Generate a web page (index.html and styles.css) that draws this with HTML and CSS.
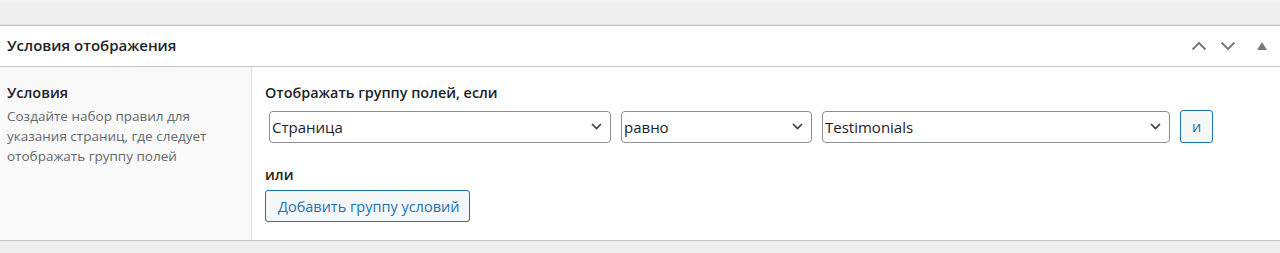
FILE: index.html
```html
<!DOCTYPE html>
<html lang="ru">
<head>
<meta charset="utf-8">
<link rel="stylesheet" href="styles.css">
</head>
<body>
<div class="top-strip"></div>
<div class="postbox">
  <div class="postbox-header">
    <h2 class="title">Условия отображения</h2>
    <div class="actions">
      <button class="icon-btn" aria-label="up">
        <svg width="16" height="10" viewBox="0 0 16 10"><path d="M1.5 8.5 L8 2 L14.5 8.5" fill="none" stroke="#787c82" stroke-width="2"/></svg>
      </button>
      <button class="icon-btn down" aria-label="down">
        <svg width="16" height="10" viewBox="0 0 16 10"><path d="M1.5 1.5 L8 8 L14.5 1.5" fill="none" stroke="#787c82" stroke-width="2"/></svg>
      </button>
      <button class="icon-btn tri" aria-label="toggle">
        <svg width="10" height="8" viewBox="0 0 10 8"><path d="M5 0 L10 8 L0 8 Z" fill="#787c82"/></svg>
      </button>
    </div>
  </div>
  <div class="postbox-body">
    <div class="label-col">
      <div class="label">Условия</div>
      <p class="desc">Создайте набор правил для указания страниц, где следует отображать группу полей</p>
    </div>
    <div class="input-col">
      <div class="group-title">Отображать группу полей, если</div>
      <div class="rule-row">
        <div class="select s1"><span>Страница</span><svg class="chev" width="11" height="7" viewBox="0 0 11 7"><path d="M1 1 L5.5 5.5 L10 1" fill="none" stroke="#3c434a" stroke-width="1.7"/></svg></div>
        <div class="select s2"><span>равно</span><svg class="chev" width="11" height="7" viewBox="0 0 11 7"><path d="M1 1 L5.5 5.5 L10 1" fill="none" stroke="#3c434a" stroke-width="1.7"/></svg></div>
        <div class="select s3"><span>Testimonials</span><svg class="chev" width="11" height="7" viewBox="0 0 11 7"><path d="M1 1 L5.5 5.5 L10 1" fill="none" stroke="#3c434a" stroke-width="1.7"/></svg></div>
        <button class="btn and">и</button>
      </div>
      <div class="or">или</div>
      <button class="btn add">Добавить группу условий</button>
    </div>
  </div>
</div>
</body>
</html>
```

FILE: styles.css
```css
* { box-sizing: border-box; }
body {
  margin: 0;
  background: #f0f0f1;
  font-family: "Open Sans", "Liberation Sans", Arial, sans-serif;
  color: #1d2327;
  height: 253px;
  overflow: hidden;
}
.top-strip {
  height: 25px;
  border-top: 2px solid #f6f6f7;
  border-bottom: 1px solid #e2e3e4;
  background: #f0f0f1;
}
.postbox {
  background: #fff;
  border-top: 1px solid #c3c4c7;
  border-bottom: 1px solid #c3c4c7;
}
.postbox-header {
  height: 41px;
  display: flex;
  align-items: center;
  justify-content: space-between;
  border-bottom: 1px solid #c3c4c7;
  padding-left: 7px;
}
.title {
  margin: 0 0 2px;
  font-size: 15px;
  font-weight: 600;
  line-height: 20px;
}
.actions {
  display: flex;
  align-items: center;
  height: 100%;
}
.icon-btn {
  background: none;
  border: 0;
  padding: 0;
  width: 29px;
  height: 36px;
  display: flex;
  align-items: center;
  justify-content: center;
}
.icon-btn.down { margin-right: 2px; }
.icon-btn.tri { width: 36px; }
.postbox-body {
  display: grid;
  grid-template-columns: 252px 1fr;
  min-height: 173px;
}
.label-col {
  background: #f9f9f9;
  border-right: 1px solid #e1e1e1;
  padding: 16px 7px 0;
}
.label {
  font-size: 14.5px;
  font-weight: 600;
  line-height: 20px;
}
.desc {
  margin: 3px 0 0;
  font-size: 13.5px;
  line-height: 20px;
  color: #646970;
  max-width: 232px;
}
.input-col {
  padding: 16px 14px 0 13px;
}
.group-title {
  font-size: 14.4px;
  font-weight: 600;
  line-height: 20px;
}
.rule-row {
  display: flex;
  gap: 10px;
  margin-top: 7px;
  margin-left: 4px;
  align-items: center;
}
.select {
  height: 32px;
  border: 1px solid #8c8f94;
  border-radius: 4px;
  display: flex;
  align-items: center;
  justify-content: space-between;
  padding: 0 8px 0 2px;
  font-size: 15px;
  color: #1d2327;
  background: #fff;
}
.s1 { width: 342px; }
.s2 { width: 191px; }
.s3 { width: 348px; }
.btn {
  font-family: inherit;
  background: #f6f7f7;
  border: 1px solid #2271b1;
  color: #2271b1;
  border-radius: 3px;
  font-size: 14.5px;
}
.and {
  width: 33px;
  height: 33px;
  padding: 0;
}
.or {
  margin-top: 22px;
  font-size: 14.5px;
  font-weight: 600;
  line-height: 20px;
}
.add {
  margin-top: 5px;
  height: 32px;
  padding: 0 12px;
  width: 205px;
  text-align: left;
  white-space: nowrap;
}
```
